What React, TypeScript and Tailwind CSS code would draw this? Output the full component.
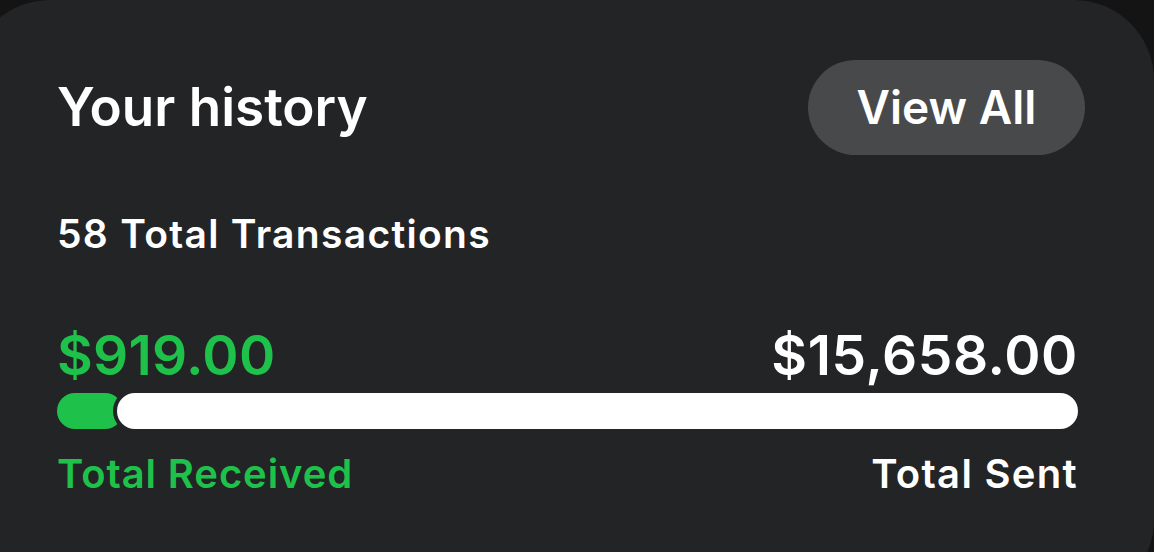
export default function App() {
    const received = 919;
    const sent = 15658;

    return (
        <div className="w-[1154px] h-[552px] overflow-hidden bg-[#141415]" style={{ fontFamily: "Inter, 'Noto Sans', sans-serif" }}>
            <div className="-ml-[30px] w-[1184px] h-[600px] rounded-[80px] bg-[#232426] pl-[87px] pr-[69px] pt-[60px]">
                {/* Header */}
                <div className="flex items-center justify-between">
                    <h2 className="text-[53px] font-semibold text-white">Your history</h2>
                    <button className="h-[95px] w-[277px] rounded-full bg-[#48494b] text-[46px] font-semibold text-white">
                        View All
                    </button>
                </div>

                <p className="mt-[59px] text-[39px] font-semibold text-white leading-none tracking-[1.3px]">58 Total Transactions</p>

                <div className="mr-[7px]">
                    {/* Amounts */}
                    <div className="mt-[75px] flex items-end justify-between leading-none">
                        <span className="text-[55px] font-semibold text-[#1ec24b] tracking-[0.3px]">${received.toFixed(2)}</span>
                        <span className="text-[55px] font-semibold text-white tracking-[0.6px]">${sent.toLocaleString("en-US", { minimumFractionDigits: 2 })}</span>
                    </div>

                    {/* Bar */}
                    <div className="mt-[10px] -mr-[4px] flex h-[36px] items-center">
                        <div className="h-[36px] w-[66px] shrink-0 rounded-full bg-[#1ec24b]" />
                        <div className="-ml-[10px] h-[44px] flex-1 rounded-full border-[4px] border-[#232426] bg-white" />
                    </div>

                    <div className="mt-[25px] flex justify-between leading-none">
                        <span className="text-[40px] font-semibold text-[#1ec24b] tracking-[0.9px]">Total Received</span>
                        <span className="text-[40px] font-semibold text-white tracking-[1.3px]">Total Sent</span>
                    </div>
                </div>
            </div>
        </div>
    );
}
